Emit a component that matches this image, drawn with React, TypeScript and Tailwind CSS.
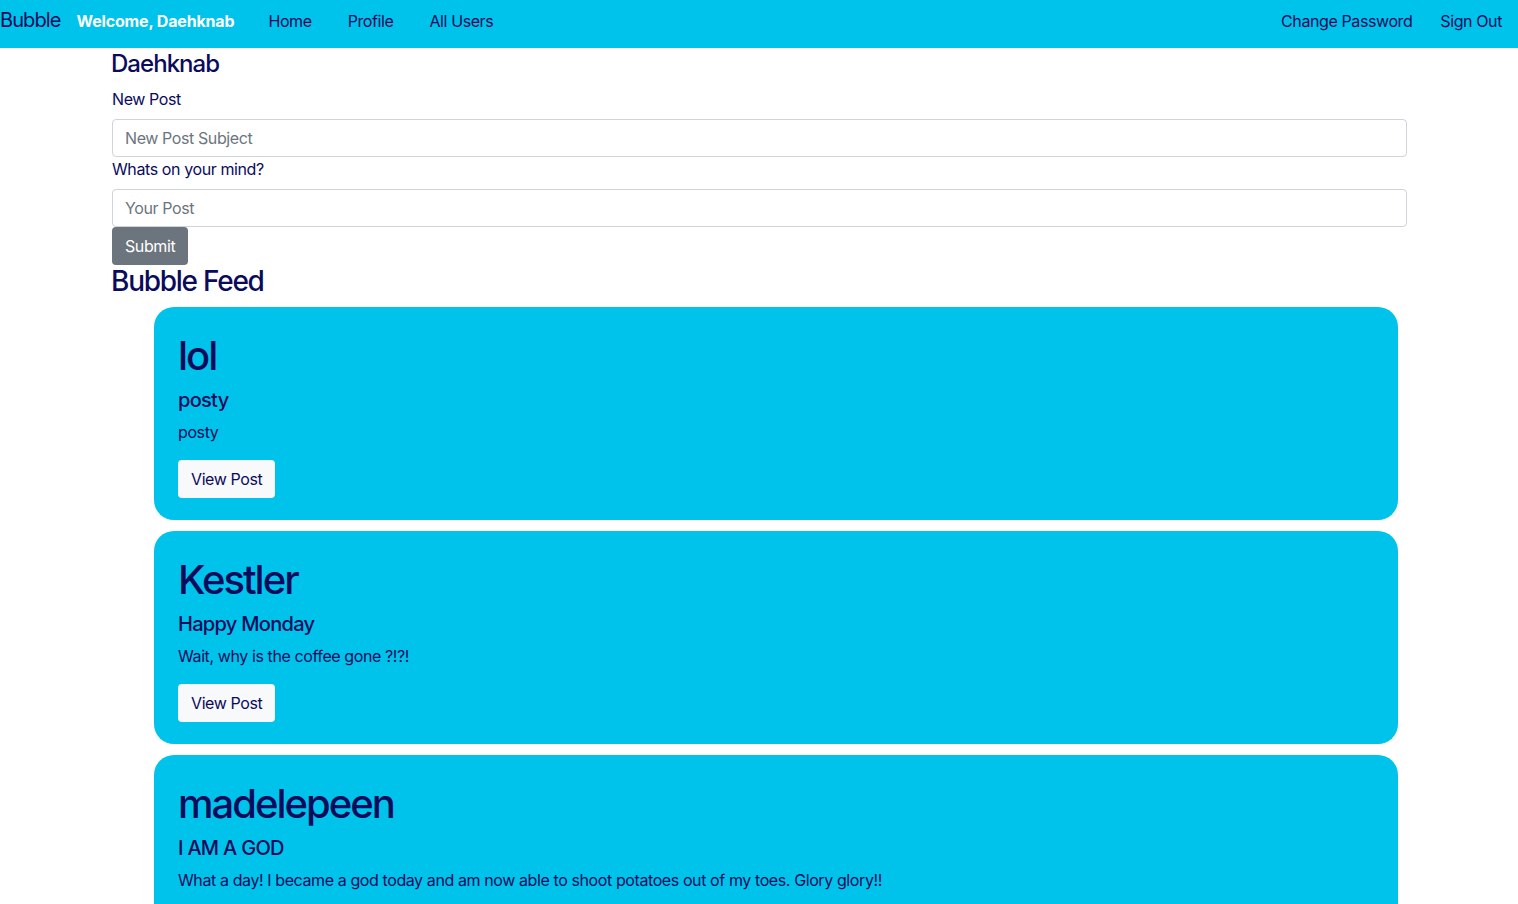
export default function App() {
  const posts = [
    { user: "lol", subject: "posty", body: "posty" },
    { user: "Kestler", subject: "Happy Monday", body: "Wait, why is the coffee gone ?!?!" },
    {
      user: "madelepeen",
      subject: "I AM A GOD",
      body: "What a day! I became a god today and am now able to shoot potatoes out of my toes. Glory glory!!",
    },
  ];

  return (
    <div
      className="min-h-screen bg-white text-[#0b0b5b] tracking-[-0.025em]"
      style={{ fontFamily: "Inter, 'Noto Sans', sans-serif" }}
    >
      {/* Navbar */}
      <nav className="h-12 bg-[#00c3eb] flex items-start pt-[9px] leading-6">
        <span className="text-xl leading-6 -mt-px tracking-[-0.045em]">Bubble</span>
        <span className="ml-[16px] font-bold text-white tracking-[-0.01em]">Welcome, Daehknab</span>
        <a className="ml-[34px]">Home</a>
        <a className="ml-[36px]">Profile</a>
        <a className="ml-[36px]">All Users</a>
        <div className="ml-auto flex mr-[16px]">
          <a>Change Password</a>
          <a className="ml-[28px]">Sign Out</a>
        </div>
      </nav>

      <div className="w-[1296px] mx-auto pl-px">
        <h4 className="text-2xl font-medium leading-[1.2] tracking-[-0.04em] mt-[2px] mb-2 -ml-px">Daehknab</h4>

        {/* New post form */}
        <form>
          <label className="block leading-6 mb-2">New Post</label>
          <input
            className="block w-full h-[38px] px-3 border border-[#ced4da] rounded-[4px] text-base placeholder:text-[#6c757d]"
            placeholder="New Post Subject"
          />
          <label className="block leading-6 mb-2">Whats on your mind?</label>
          <input
            className="block w-full h-[38px] px-3 border border-[#ced4da] rounded-[4px] text-base placeholder:text-[#6c757d]"
            placeholder="Your Post"
          />
          <button type="button" className="h-[38px] px-[13px] rounded-[4px] bg-[#6c757d] text-white">
            Submit
          </button>
        </form>

        <h2 className="text-[28px] font-medium leading-[1.2] tracking-[-0.045em] mb-[9px] -ml-px">Bubble Feed</h2>

        {/* Feed */}
        <div className="ml-[42px] w-[1244px] flex flex-col gap-[11px]">
          {posts.map((p) => (
            <div key={p.user} className="bg-[#00c3eb] rounded-[20px] px-6 pt-[25px] pb-[22px]">
              <h1 className="text-[40px] font-medium leading-[1.2] tracking-[-0.05em] mb-2">{p.user}</h1>
              <h5 className="text-xl font-medium leading-[1.2] tracking-[-0.035em] mb-2">{p.subject}</h5>
              <p className="leading-6 mb-4">{p.body}</p>
              <button className="h-[38px] px-[13px] rounded-[4px] bg-[#f8f9fa]">View Post</button>
            </div>
          ))}
        </div>
      </div>
    </div>
  );
}
